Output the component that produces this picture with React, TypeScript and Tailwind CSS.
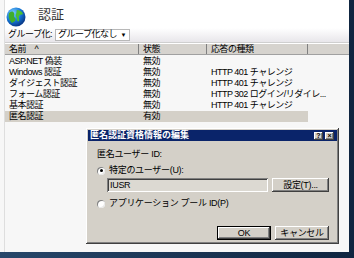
import React from "react";

const rows = [
  { name: "ASP.NET 偽装", state: "無効", type: "" },
  { name: "Windows 認証", state: "無効", type: "HTTP 401 チャレンジ" },
  { name: "ダイジェスト認証", state: "無効", type: "HTTP 401 チャレンジ" },
  { name: "フォーム認証", state: "無効", type: "HTTP 302 ログイン/リダイレ..." },
  { name: "基本認証", state: "無効", type: "HTTP 401 チャレンジ" },
  { name: "匿名認証", state: "有効", type: "", selected: true },
];

const raised =
  "bg-[#d4d0c8] shadow-[inset_-1px_-1px_#404040,inset_1px_1px_#ffffff,inset_-2px_-2px_#808080]";

function Globe() {
  return (
    <svg width="20" height="20" viewBox="0 0 20 20">
      <defs>
        <radialGradient id="g" cx="35%" cy="30%" r="70%">
          <stop offset="0" stopColor="#7fd0ff" />
          <stop offset="0.6" stopColor="#1577d6" />
          <stop offset="1" stopColor="#0a3c8c" />
        </radialGradient>
      </defs>
      <circle cx="10" cy="10" r="9.5" fill="url(#g)" />
      <path d="M3 6c2-2 4-2 5 0s-1 3 1 5-1 4-3 5c-2-2-4-5-3-10z" fill="#3fae2a" />
      <path d="M11 3c2 0 5 1 6 4-1 1-3 0-4 2s1 3 0 5c-1 1-2 0-2-2s-2-3-1-5 0-3 1-4z" fill="#4cbf30" />
    </svg>
  );
}

function Radio({ on }: { on?: boolean }) {
  return (
    <span className="w-[8px] h-[8px] rounded-full bg-white shadow-[inset_1px_1px_#808080,inset_-1px_-1px_#e8e8e8] flex items-center justify-center">
      {on && <span className="w-[3px] h-[3px] rounded-full bg-black" />}
    </span>
  );
}

function Dialog() {
  return (
    <div className="absolute left-[86px] top-[128px] w-[253px] h-[116px] bg-[#d4d0c8] shadow-[inset_-1px_-1px_#404040,inset_1px_1px_#ffffff,inset_-2px_-2px_#808080] p-[2px] flex flex-col">
      <div className="h-[11px] bg-[#0a246a] flex items-center justify-between pl-[2px] pr-[3px]">
        <span className="text-white font-bold text-[9px] leading-none">匿名認証資格情報の編集</span>
        <div className="flex gap-[1px]">
          <span className={`${raised} w-[9px] h-[8px] text-[7px] leading-[8px] text-center font-bold text-black`}>?</span>
          <span className={`${raised} w-[9px] h-[8px] text-[7px] leading-[8px] text-center font-bold text-black ml-[1px]`}>×</span>
        </div>
      </div>
      <div className="flex flex-col pl-[9px] pt-[8px] pr-[8px] text-[9px] tracking-[-0.3px] text-black">
        <span className="leading-[11px]">匿名ユーザー ID:</span>
        <div className="flex items-center gap-[4px] mt-[5px] h-[11px]">
          <Radio on />
          <span>特定のユーザー(U):</span>
        </div>
        <div className="flex mt-[2px] h-[14px] pl-[10px] gap-[4px]">
          <div className="flex-1 bg-[#dcd9d2] shadow-[inset_1px_1px_#808080,inset_-1px_-1px_#ffffff,inset_2px_2px_#404040] px-[3px] leading-[14px]">
            IUSR
          </div>
          <div className={`${raised} w-[57px] text-center leading-[14px]`}>設定(T)...</div>
        </div>
        <div className="flex items-center gap-[4px] mt-[6px] h-[11px]">
          <Radio />
          <span>アプリケーション プール ID(P)</span>
        </div>
        <div className="flex justify-end gap-[4px] mt-[17px]">
          <div className="w-[54px] h-[14px] border border-black flex">
            <div className={`${raised} flex-1 text-center leading-[12px]`}>OK</div>
          </div>
          <div className={`${raised} w-[54px] h-[14px] text-center leading-[14px]`}>キャンセル</div>
        </div>
      </div>
    </div>
  );
}

export default function App() {
  return (
    <div
      className="w-[354px] h-[258px] bg-gradient-to-r from-[#27476a] to-[#0f2540] pr-[5px] pb-[6px] overflow-hidden"
      style={{ fontFamily: '"Liberation Sans", "Noto Sans CJK JP", sans-serif' }}
    >
      <div className="relative w-full h-full bg-[#f7f7f7] pl-[4px]">
        <div className="w-full h-full border-l border-[#dedede] bg-white flex flex-col">
          <div className="h-[28px] flex items-start pt-[7px] pl-[1px] gap-[12px]">
            <Globe />
            <span className="text-[13px] leading-[13px] pt-[1px] text-[#333]">認証</span>
          </div>
          <div className="h-[15px] bg-gradient-to-b from-[#ffffff] to-[#e8e6ea] border-b border-[#cfcfcf] flex items-center pl-[3px] gap-[3px] text-[9px] tracking-[-0.5px] whitespace-nowrap">
            <span>グループ化:</span>
            <div className="w-[75px] h-[12px] bg-white border border-[#b8b8b8] flex items-center justify-between pl-[2px] pr-[3px]">
              <span>グループ化なし</span>
              <span className="text-[6px]">▼</span>
            </div>
          </div>
          <div className="mt-[1px] h-[11px] flex text-[9px] leading-[11px] tracking-[-0.5px] bg-[#d6d3ce] border-b border-[#a0a0a0] whitespace-nowrap">
            <div className="w-[134px] pl-[4px] border-r border-[#808080]">名前　^</div>
            <div className="w-[68px] pl-[4px] border-r border-[#808080]">状態</div>
            <div className="w-[101px] pl-[4px] border-r border-[#808080]">応答の種類</div>
            <div className="flex-1" />
          </div>
          <div className="flex flex-col text-[9px] leading-[11px] tracking-[-0.5px] text-black pt-[1px] bg-[#f7f7f7] flex-1 whitespace-nowrap">
            {rows.map((r) => (
              <div key={r.name} className={`flex h-[11px] w-[303px] ${r.selected ? "bg-[#d4d0c8]" : ""}`}>
                <div className="w-[134px] pl-[4px]">{r.name}</div>
                <div className="w-[68px] pl-[4px]">{r.state}</div>
                <div className="w-[101px] pl-[4px]">{r.type}</div>
              </div>
            ))}
          </div>
        </div>
        <Dialog />
      </div>
    </div>
  );
}
